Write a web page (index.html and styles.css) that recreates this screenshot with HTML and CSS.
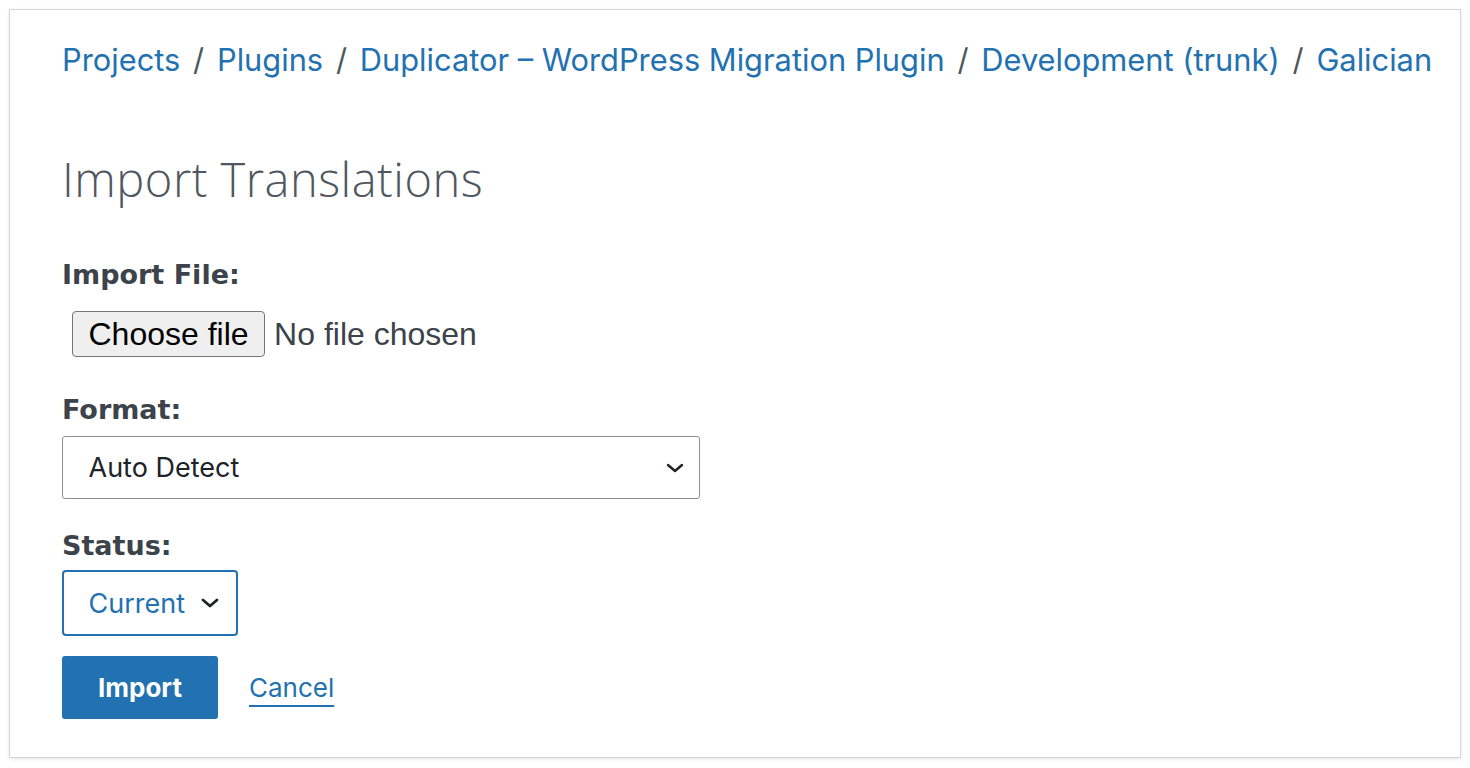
FILE: index.html
```html
<!DOCTYPE html>
<html lang="en">
<head>
<meta charset="utf-8">
<title>Import Translations</title>
<link rel="stylesheet" href="styles.css">
</head>
<body>
<div class="panel">
  <nav class="crumbs">
    <a href="#">Projects</a><span class="sep">/</span>
    <a href="#">Plugins</a><span class="sep">/</span>
    <a href="#">Duplicator – WordPress Migration Plugin</a><span class="sep">/</span>
    <a href="#">Development (trunk)</a><span class="sep">/</span>
    <a href="#">Galician</a>
  </nav>
  <h1 class="title">Import Translations</h1>
  <form class="form">
    <div class="label l-file">Import File:</div>
    <div class="file-row">
      <span class="file-btn">Choose file</span>
      <span class="file-none">No file chosen</span>
    </div>
    <div class="label l-format">Format:</div>
    <div class="select wide">
      <span class="sel-text">Auto Detect</span>
      <svg class="chev" width="20" height="12" viewBox="0 0 20 12"><path d="M3 3 L10 9 L17 3" fill="none" stroke="#1d2327" stroke-width="2.4" stroke-linecap="round" stroke-linejoin="round"/></svg>
    </div>
    <div class="label l-status">Status:</div>
    <div class="select narrow">
      <span class="sel-text blue">Current</span>
      <svg class="chev" width="20" height="12" viewBox="0 0 20 12"><path d="M3 3 L10 9 L17 3" fill="none" stroke="#1d2327" stroke-width="2.8" stroke-linecap="round" stroke-linejoin="round"/></svg>
    </div>
    <div class="actions">
      <span class="btn-primary">Import</span>
      <a href="#" class="cancel">Cancel</a>
    </div>
  </form>
</div>
</body>
</html>
```
FILE: styles.css
```css
html, body {
  margin: 0;
  padding: 0;
  background: #ffffff;
}
body {
  padding: 10px;
  font-family: "Inter", "Noto Sans", sans-serif;
  color: #3c434a;
}
.panel {
  box-sizing: border-box;
  width: 1450px;
  height: 747px;
  background: #fff;
  box-shadow: 0 0 0 1px #d6d6d6, 0 1px 4px rgba(0,0,0,0.18);
  padding: 31px 0 0 52px;
  display: flex;
  flex-direction: column;
}
.crumbs {
  display: flex;
  align-items: center;
  font-size: 30.8px;
  line-height: 38px;
  white-space: nowrap;
}
.crumbs a {
  color: #2271b1;
  text-decoration: none;
}
.sep {
  color: #50575e;
  margin: 0 12.8px;
}
.title {
  margin: 0;
  margin-top: 72px;
  font-family: "Open Sans", sans-serif;
  font-weight: 300;
  font-size: 47px;
  line-height: 56px;
  color: #50575e;
  letter-spacing: 0.5px;
}
.form {
  display: flex;
  flex-direction: column;
  align-items: flex-start;
}
.label {
  font-family: "DejaVu Sans", sans-serif;
  font-weight: 700;
  font-size: 27px;
  line-height: 34px;
  color: #3c434a;
}
.l-file { margin-top: 51px; }
.file-row {
  display: flex;
  align-items: center;
  margin-top: 19px;
  margin-left: 10px;
}
.file-btn {
  box-sizing: border-box;
  height: 46px;
  padding: 0 15.5px;
  display: flex;
  align-items: center;
  background: #efefef;
  border: 1.5px solid #767676;
  border-radius: 4px;
  font-family: "Liberation Sans", Arial, sans-serif;
  font-size: 32px;
  color: #000;
}
.file-none {
  margin-left: 9px;
  font-family: "Liberation Sans", Arial, sans-serif;
  font-size: 32px;
  color: #3c434a;
}
.l-format { margin-top: 36px; }
.select {
  box-sizing: border-box;
  display: flex;
  align-items: center;
  justify-content: space-between;
  background: #fff;
}
.select.wide {
  margin-top: 9px;
  width: 638px;
  height: 63px;
  border: 1.5px solid #8c8f94;
  border-radius: 3px;
  padding: 0 14px 0 25.5px;
}
.sel-text {
  font-size: 27px;
  color: #1d2327;
}
.sel-text.blue {
  color: #2271b1;
}
.l-status { margin-top: 30px; }
.select.narrow {
  margin-top: 7px;
  width: 176px;
  height: 66px;
  border: 2.5px solid #2271b1;
  border-radius: 4px;
  padding: 0 16px 0 24.5px;
}
.actions {
  display: flex;
  align-items: center;
  margin-top: 20px;
}
.btn-primary {
  box-sizing: border-box;
  width: 156px;
  height: 63px;
  display: flex;
  align-items: center;
  justify-content: center;
  background: #2271b1;
  color: #fff;
  border-radius: 3px;
  font-weight: 700;
  font-size: 26px;
}
.cancel {
  margin-left: 31px;
  color: #2271b1;
  font-size: 26px;
  text-decoration: underline;
  text-underline-offset: 8px;
  text-decoration-thickness: 2px;
}
```
